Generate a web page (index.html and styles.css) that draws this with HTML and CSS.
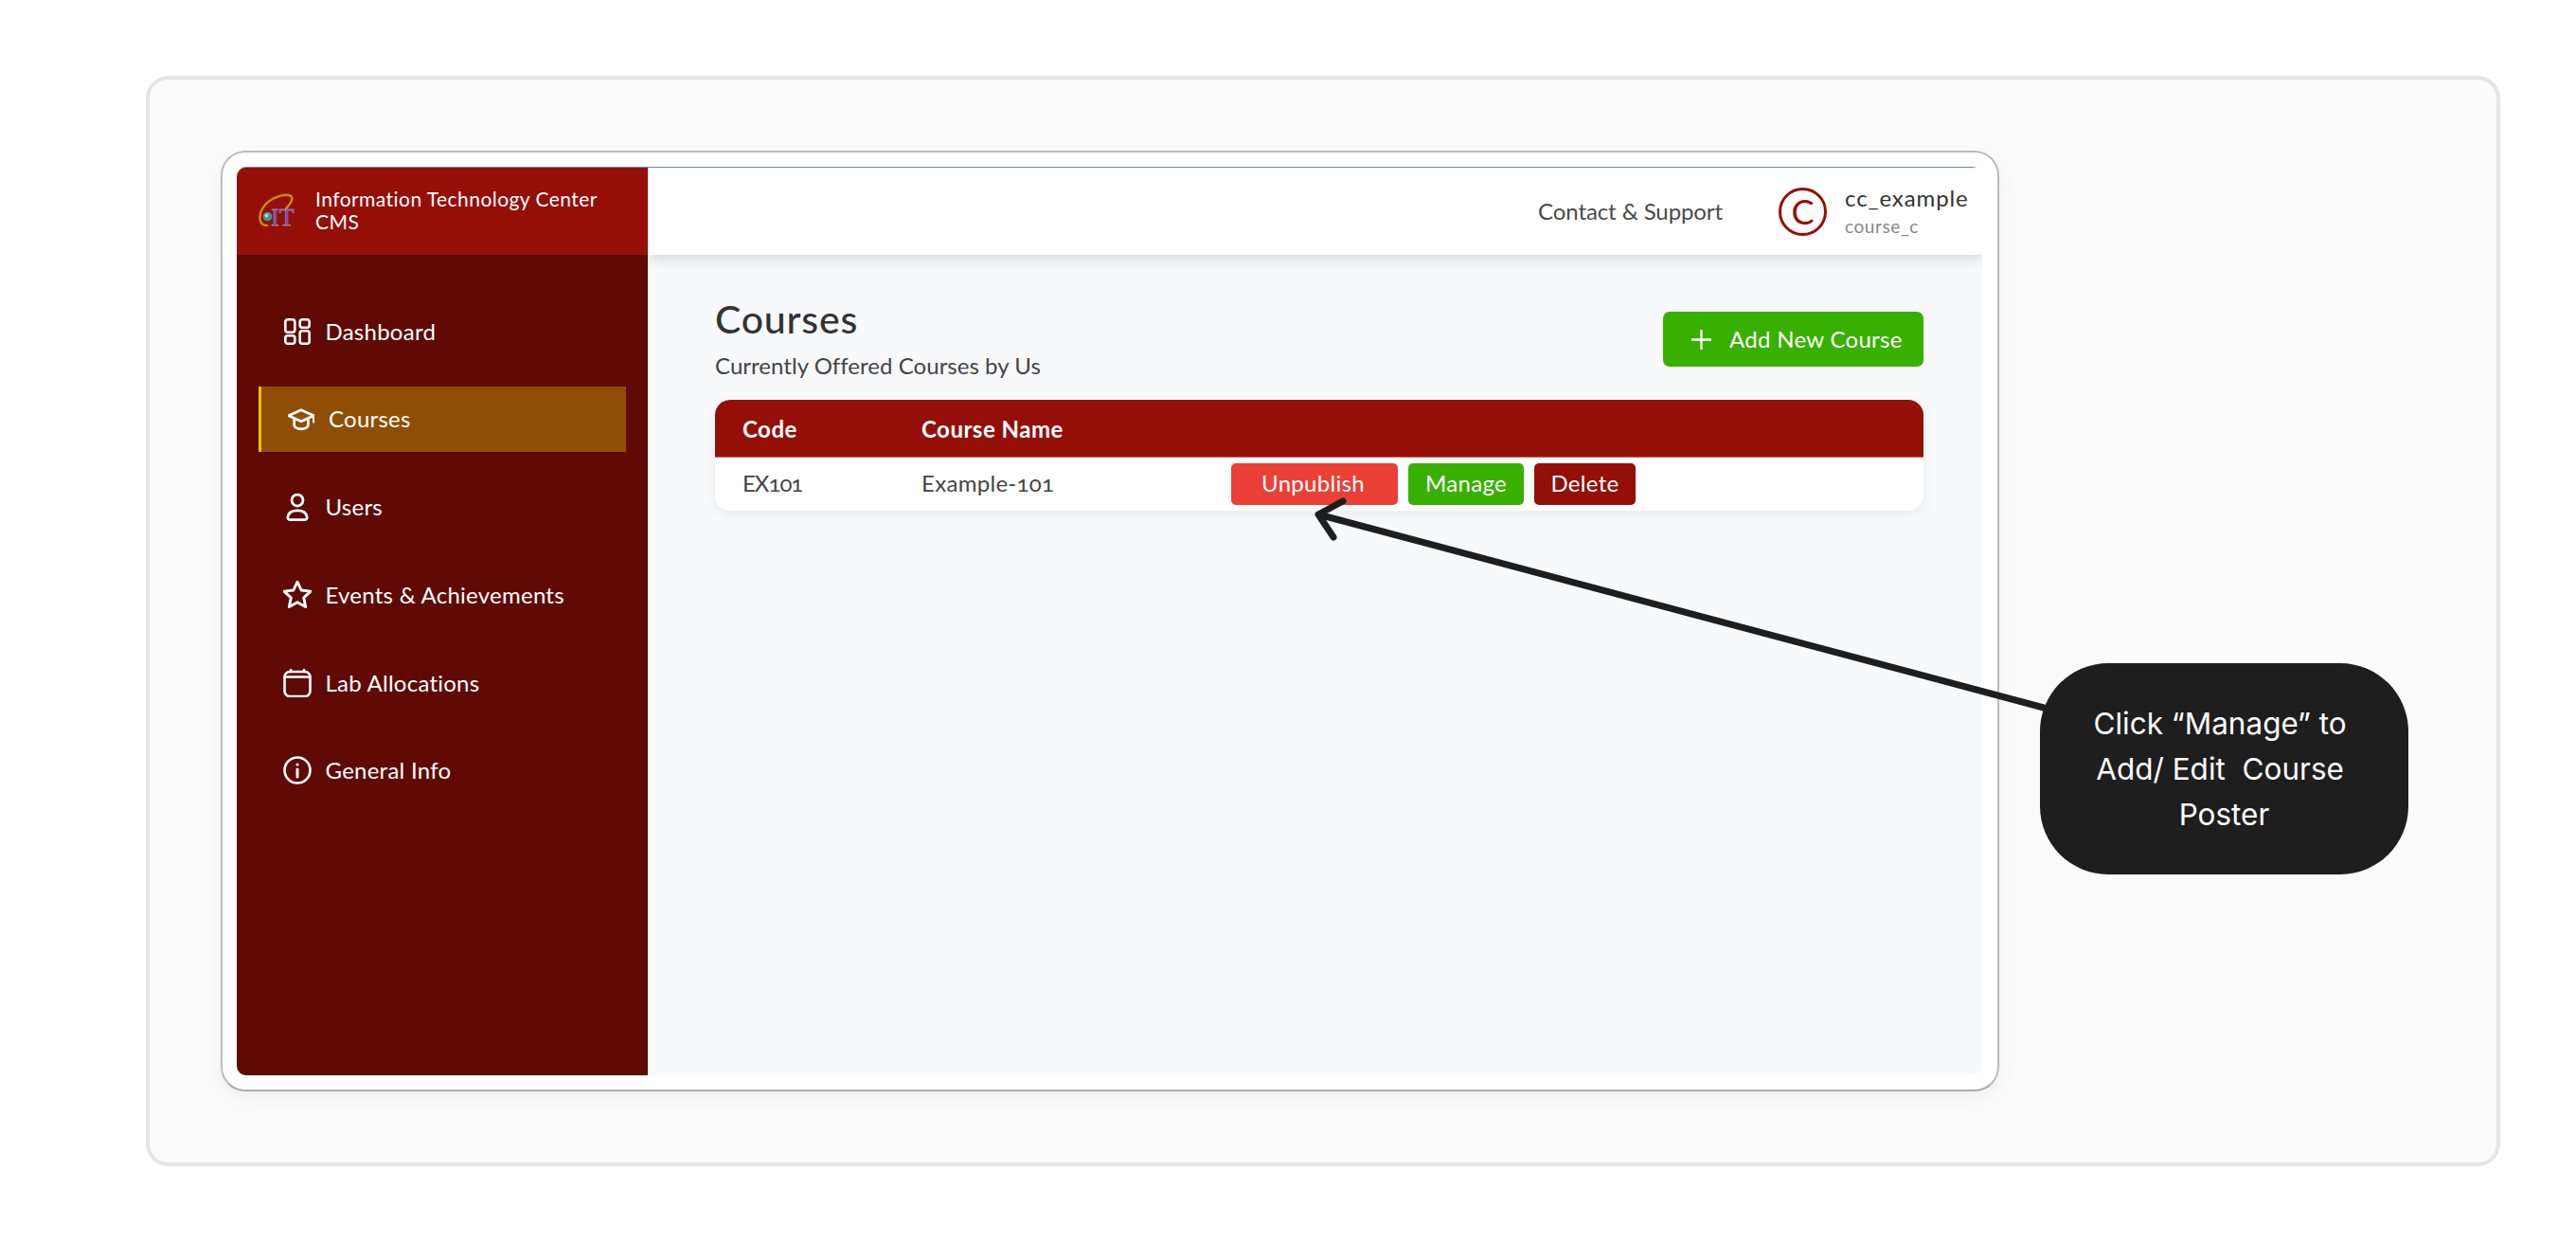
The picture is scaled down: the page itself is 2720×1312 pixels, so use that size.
FILE: index.html
```html
<!DOCTYPE html>
<html lang="en">
<head>
<meta charset="utf-8">
<title>Courses</title>
<link rel="stylesheet" href="styles.css">
</head>
<body>
<div class="frame">
  <div class="card">
    <div class="app">
      <aside class="sidebar">
        <div class="brand">
          <svg class="logo" viewBox="0 -3 38 42" aria-hidden="true">
            <path class="logo-arc" d="M9 33C-1 33-1 20 8 10 16 2 32-2 35 3 36 6 33 11 29 15"/>
            <circle cx="9.500" cy="23.500" r="4.800" fill="#3f9a86"/>
            <circle cx="8.500" cy="22.500" r="2" fill="#9fd6e6"/>
            <text class="logo-text" x="13" y="33">IT</text>
          </svg>
          <div class="brand-name">Information Technology Center<br>CMS</div>
        </div>
        <nav class="nav">
          <a class="nav-item">
            <svg class="nav-icon" viewBox="0 0 28 28"><rect x="1.300" y="1.300" width="10" height="13.500" rx="2.500"/><rect x="16.700" y="1.300" width="10" height="8.500" rx="2.500"/><rect x="1.300" y="18.200" width="10" height="8.500" rx="2.500"/><rect x="16.700" y="13.200" width="10" height="13.500" rx="2.500"/></svg>
            <span>Dashboard</span>
          </a>
          <a class="nav-item active">
            <svg class="nav-icon nav-icon-tight" viewBox="1.500 1.500 21 21"><path d="M22 9.500 12 5 2 9.500l10 4.500 10-4.500v5"/><path d="M6.500 12v5a5.500 3.200 0 0 0 11 0v-5"/></svg>
            <span>Courses</span>
          </a>
          <a class="nav-item">
            <svg class="nav-icon nav-icon-lg" viewBox="0 0 28 28"><circle cx="14" cy="7.500" r="5.600"/><path d="M7 26.700h14c1.700 0 2.700-1 2.500-2.600-.6-4.300-4.300-6.400-9.500-6.400s-8.900 2.100-9.500 6.400C4.300 25.700 5.300 26.700 7 26.700z"/></svg>
            <span>Users</span>
          </a>
          <a class="nav-item">
            <svg class="nav-icon nav-icon-lg nav-icon-tight" viewBox="1.500 1.500 21 21"><path d="M12 2.200l2.900 6.300 6.900.8-5.100 4.700 1.400 6.800-6.100-3.400-6.100 3.400 1.400-6.800L2.200 9.300l6.900-.8z"/></svg>
            <span>Events &amp; Achievements</span>
          </a>
          <a class="nav-item">
            <svg class="nav-icon nav-icon-lg" viewBox="0 0 30 30"><rect x="1.500" y="3" width="27" height="26" rx="5.500"/><path d="M1.500 8.500h27M8 1v2M22 1v2"/></svg>
            <span>Lab Allocations</span>
          </a>
          <a class="nav-item">
            <svg class="nav-icon nav-icon-lg" viewBox="0 0 30 30"><circle cx="15" cy="15" r="13.500"/><path d="M15 14v8" stroke-width="3"/><circle class="dot" cx="15" cy="9" r="1.600"/></svg>
            <span>General Info</span>
          </a>
        </nav>
      </aside>
      <main class="main">
        <header class="topbar">
          <a class="support">Contact &amp; Support</a>
          <div class="avatar">C</div>
          <div class="who">
            <div class="who-name">cc_example</div>
            <div class="who-role">course_c</div>
          </div>
        </header>
        <section class="content">
          <div class="page-head">
            <div>
              <h1 class="page-title">Courses</h1>
              <p class="page-sub">Currently Offered Courses by Us</p>
            </div>
            <button class="add-btn">
              <svg class="plus" viewBox="0 0 22 22"><path d="M11 0v22M0 11h22"/></svg>
              <span class="add-label">Add New Course</span>
            </button>
          </div>
          <div class="table-wrap">
            <table class="table">
              <thead>
                <tr><th class="col-code">Code</th><th class="col-name">Course Name</th><th></th></tr>
              </thead>
              <tbody>
                <tr>
                  <td class="cell-text cell-code">EX101</td>
                  <td class="cell-text">Example-101</td>
                  <td>
                    <div class="actions">
                      <button class="btn btn-unpublish">Unpublish</button>
                      <button class="btn btn-manage">Manage</button>
                      <button class="btn btn-delete">Delete</button>
                    </div>
                  </td>
                </tr>
              </tbody>
            </table>
          </div>
        </section>
      </main>
    </div>
  </div>
</div>
<svg class="arrow" viewBox="0 0 2720 1312" aria-hidden="true">
  <path d="M2158 747 1392 543M1418 529 1392 543 1408 567"/>
</svg>
<div class="callout">Click “Manage” to 
Add/ Edit  Course 
Poster</div>
</body>
</html>
```
FILE: styles.css
```css
* { box-sizing: border-box; }
html, body { margin: 0; height: 1312px; background: #fff; overflow: hidden; }
body { position: relative; padding: 80px 0 0 154px; font-family: "Lato", "Open Sans", sans-serif; font-size: 24px; color: #444; }

.frame {
  width: 2486px; height: 1151px;
  padding: 75px;
  background: #fbfbfb;
  border: 4px solid #e5e5e5;
  border-radius: 24px;
}
.card {
  width: 1878px; height: 993px;
  padding: 15px 16px 15px 15px;
  background: #fff;
  border: 2px solid #bbb;
  border-bottom-color: #aaa;
  border-radius: 26px;
  box-shadow: 0 6px 16px rgba(0,0,0,.06);
}
.app { display: flex; height: 100%; border-top: 1px solid #6d86a8; border-radius: 10px; }

.sidebar { width: 434px; flex: none; background: #5f0a04; border-radius: 10px 0 0 10px; overflow: hidden; color: #fff; }
.brand { height: 92px; display: flex; align-items: center; gap: 22px; padding-left: 23px; background: #940f08; }
.logo { width: 38px; height: 42px; flex: none; }
.logo-arc { fill: none; stroke: #d18a12; stroke-width: 2.400; stroke-linecap: round; }
.logo-text { font-family: "Liberation Serif", serif; font-size: 26px; fill: #5f50c4; stroke: #c9c4e8; stroke-width: .3; }
.brand-name { font-size: 21px; line-height: 24px; letter-spacing: .45px; padding-bottom: 3px; }
.nav { display: flex; flex-direction: column; gap: 23.800px; padding: 46px 23px 0; }
.nav-item { display: flex; align-items: center; gap: 15.500px; height: 69px; padding-left: 27px; letter-spacing: .25px; }
.nav-item.active { padding-left: 28px; gap: 15px; background: #8f4e04; border-left: 3px solid #eac102; }
.nav-item span { padding-bottom: 1px; }
.nav-icon { width: 28px; height: 28px; flex: none; fill: none; stroke: #fff; stroke-width: 2.600; stroke-linecap: round; stroke-linejoin: round; }
.nav-icon .dot { fill: #fff; stroke: none; }
.nav-icon-lg { width: 30px; height: 30px; margin: 0 -1px; }
.nav-icon-tight { stroke-width: 2; }

.main { flex: 1; display: flex; flex-direction: column; background: #f8f9fb; border-radius: 0 0 10px 0; overflow: hidden; }
.topbar {
  height: 92px; flex: none;
  display: flex; align-items: center; justify-content: flex-end;
  padding-right: 15px;
  background: #fff;
  box-shadow: 0 6px 12px rgba(0,0,0,.12);
}
.support { margin-right: 59px; padding-bottom: 2px; letter-spacing: -.1px; color: #4a4a4a; }
.avatar {
  width: 51px; height: 51px; margin-right: 19px;
  display: flex; align-items: center; justify-content: center;
  border: 3px solid #940f08; border-radius: 50%;
  color: #940f08; font-size: 36px; font-weight: 400;
}
.who { width: 130px; }
.who-name { font-size: 24px; line-height: 28px; color: #333; letter-spacing: .9px; margin-top: -2px; }
.who-role { font-size: 19px; line-height: 22px; margin-top: 5px; color: #888; letter-spacing: .6px; }

.content { padding: 47px 62px 0 71px; }
.page-head { display: flex; justify-content: space-between; align-items: flex-start; margin-bottom: 22px; }
.page-title { margin: -2px 0 0; font-size: 41px; line-height: 46px; font-weight: 500; color: #333; letter-spacing: .8px; }
.page-sub { margin: 12px 0 0; font-size: 24px; line-height: 28px; color: #444; letter-spacing: .04px; }
.add-btn {
  width: 275px; height: 58px; margin-top: 13px;
  display: flex; align-items: center; gap: 19px; padding: 0 0 0 30px;
  background: #38b000; color: #fff; border: 0; border-radius: 7px;
  font: inherit; letter-spacing: .3px;
}
.add-label { padding-bottom: 2px; }
.plus { width: 21px; height: 21px; flex: none; fill: none; stroke: #fff; stroke-width: 2.400; }

.table-wrap { border-radius: 16px; overflow: hidden; background: #fff; box-shadow: 0 4px 14px rgba(0,0,0,.06); }
.table { width: 100%; border-collapse: separate; border-spacing: 0; table-layout: fixed; }
.table th, .table td { padding: 0 0 0 29px; text-align: left; }
.table th { height: 61px; background: #940f08; color: #fff; font-weight: 700; letter-spacing: .5px; border-bottom: 1px solid #c9615c; }
.table td { height: 56px; color: #444; letter-spacing: .3px; font-variant-numeric: oldstyle-nums; }
.table .cell-text { padding-bottom: 3px; }
.table .cell-code { letter-spacing: -1px; }
.col-code { width: 189px; }
.col-name { width: 327px; }
.actions { display: flex; gap: 11px; }
.btn { height: 44px; padding: 0 0 4px; border: 0; border-radius: 5px; color: #fff; font: inherit; letter-spacing: .3px; }
.btn-unpublish { width: 176px; padding-right: 3px; background: #ea4035; }
.btn-manage { width: 122px; background: #38b000; }
.btn-delete { width: 107px; background: #940f08; }

.arrow { position: absolute; left: 0; top: 0; width: 2720px; height: 1312px; fill: none; stroke: #1e1e1e; stroke-width: 7; stroke-linecap: round; stroke-linejoin: round; pointer-events: none; }
.callout {
  position: absolute; left: 2154px; top: 700px;
  width: 389px; height: 223px;
  display: flex; align-items: center; justify-content: center;
  background: #1e1e1e; border-radius: 72px;
  color: #fff; font-family: "Inter", sans-serif; font-size: 31.500px; line-height: 48px;
  text-align: center; white-space: pre;
}
```
